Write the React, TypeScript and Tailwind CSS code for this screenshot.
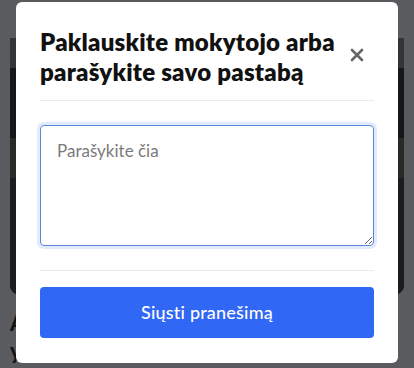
import React from "react";

export default function App() {
  return (
    <div
      className="relative h-[368px] w-[414px] overflow-hidden bg-[#5a5b5f]"
      style={{ fontFamily: "Lato, 'Noto Sans', sans-serif" }}
    >
      {/* page behind overlay */}
      <div className="px-[10px] pt-[38px]">
        <div className="h-[257px] overflow-hidden rounded-b-[10px] bg-[#1e1f21]">
          <div className="h-[30px] bg-[#333437]" />
          <div className="h-[70px] bg-[#161718]" />
          <div className="h-[40px] bg-[#262b28]" />
          <div className="h-[117px] bg-[#1b1c1e]" />
        </div>
        <div className="mt-[14px] text-[22px] font-bold leading-[28px] text-[#111]">A</div>
        <div className="text-[22px] font-bold leading-[28px] text-[#111]">y</div>
      </div>

      {/* modal */}
      <div className="absolute left-[16px] top-[2px] flex h-[361px] w-[382px] flex-col rounded-[6px] bg-white px-6">
        <div className="flex items-center justify-between border-b border-[#ebebeb] pb-[13px] pt-[25px]">
          <h2 className="whitespace-nowrap text-[24px] font-extrabold leading-[30px] tracking-[0.25px] text-[#111]">
            Paklauskite mokytojo arba
            <br />
            parašykite savo pastabą
          </h2>
          <button className="mr-[9px] mt-[-4px] flex h-[16px] w-[16px] shrink-0 items-center justify-center text-[#666]">
            <svg width="14" height="14" viewBox="0 0 14 14" fill="none">
              <path d="M2 2L12 12M12 2L2 12" stroke="currentColor" strokeWidth="2.6" strokeLinecap="round" />
            </svg>
          </button>
        </div>
        <textarea
          placeholder="Parašykite čia"
          className="mt-[24px] h-[121px] w-full resize-y rounded-[4px] border border-[#5b86d6] px-[16px] py-[12px] text-[17px] text-[#222] outline-none ring-[3px] ring-[#e3eafb] placeholder:text-[#7a7a7a]"
          style={{ fontFamily: "Lato, 'Noto Sans', sans-serif" }}
        />
        <div className="mt-[24px] border-t border-[#ebebeb]" />
        <button className="mt-[16px] flex h-[51px] w-full items-center justify-center rounded-[4px] bg-[#3068f5] text-[18px] font-medium tracking-[0.2px] text-white">
          Siųsti pranešimą
        </button>
      </div>
    </div>
  );
}
